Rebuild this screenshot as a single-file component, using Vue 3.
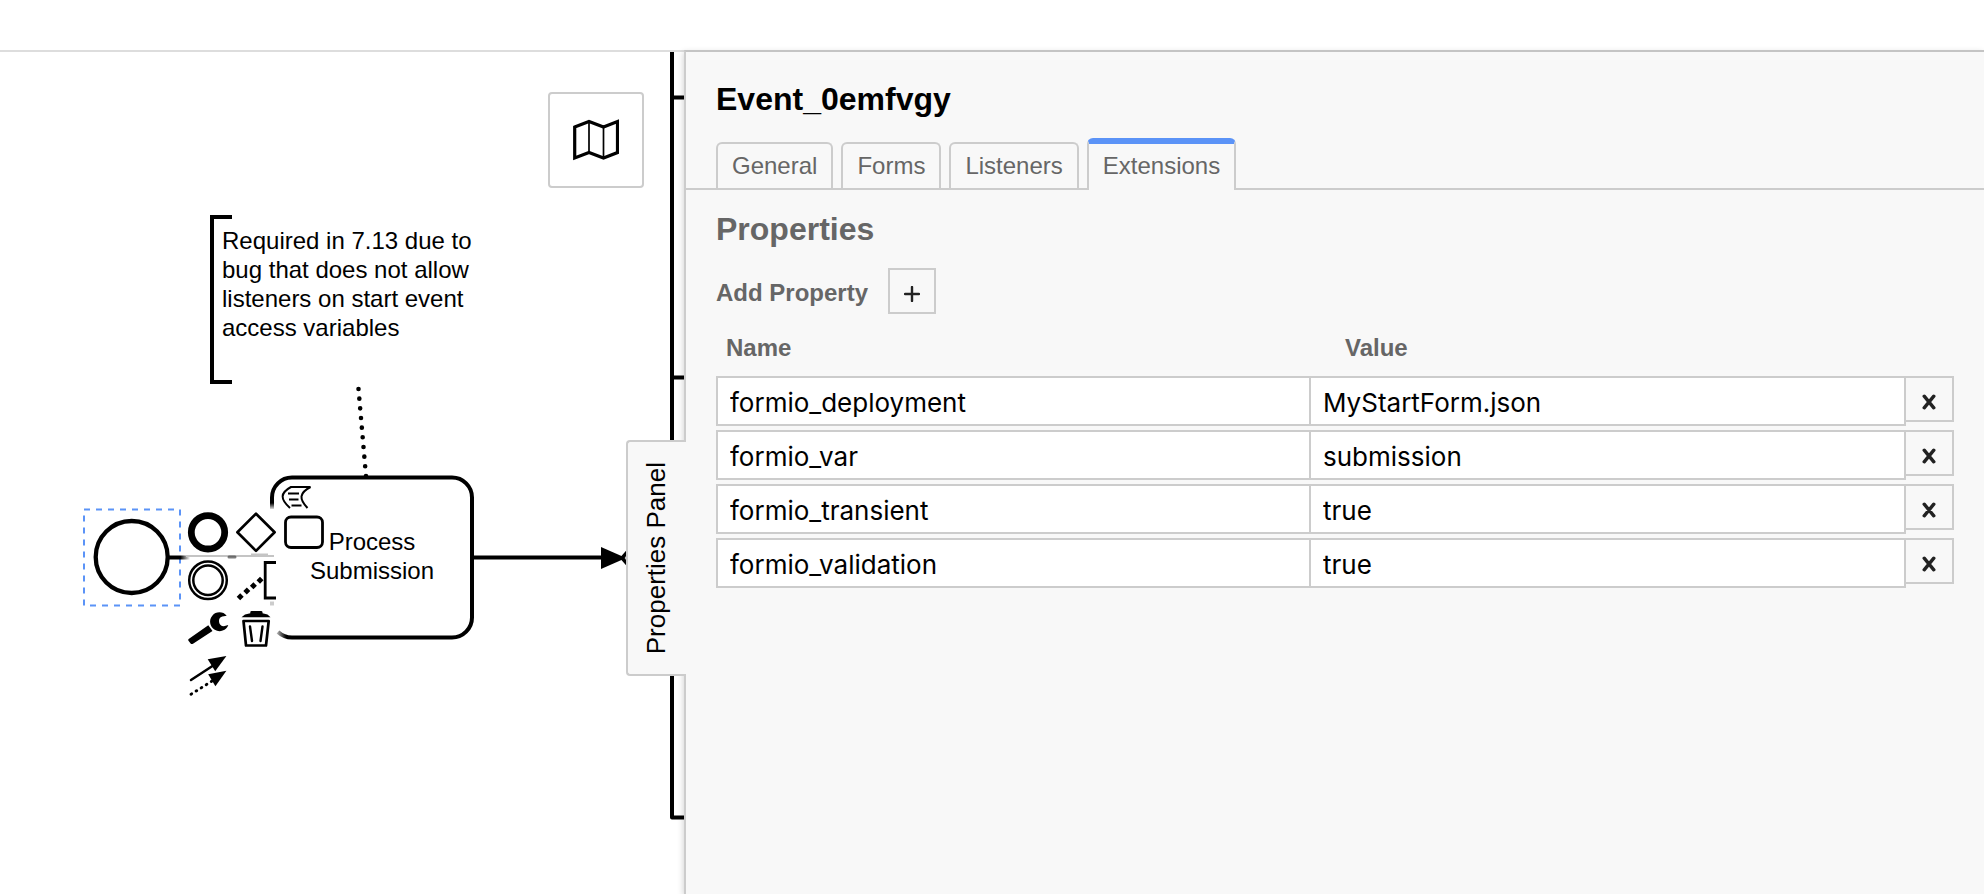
<script setup>
import { ref } from 'vue'

const tabs = ['General', 'Forms', 'Listeners', 'Extensions']
const activeTab = ref('Extensions')

const properties = ref([
  { name: 'formio_deployment', value: 'MyStartForm.json' },
  { name: 'formio_var', value: 'submission' },
  { name: 'formio_transient', value: 'true' },
  { name: 'formio_validation', value: 'true' },
])

function addProperty() {
  properties.value.push({ name: '', value: '' })
}

function removeProperty(index) {
  properties.value.splice(index, 1)
}
</script>

<template>
  <div class="modeler">
    <header class="topbar"></header>
    <main class="workspace">
      <section class="canvas" aria-label="Diagram">
        <svg class="diagram" width="700" height="842" viewBox="0 52 700 842" fill="none" stroke="#000">
          <defs>
            <linearGradient id="flow-fade" gradientUnits="userSpaceOnUse" x1="178" y1="0" x2="190" y2="0">
              <stop offset="0.2" stop-color="#000" />
              <stop offset="1" stop-color="#000" stop-opacity="0" />
            </linearGradient>
            <linearGradient id="side-fade" gradientUnits="userSpaceOnUse" x1="0" y1="500" x2="0" y2="510">
              <stop offset="0.3" stop-color="#000" />
              <stop offset="1" stop-color="#000" stop-opacity="0" />
            </linearGradient>
            <linearGradient id="corner-fade" gradientUnits="userSpaceOnUse" x1="277" y1="0" x2="286" y2="0">
              <stop offset="0" stop-color="#000" stop-opacity="0.3" />
              <stop offset="1" stop-color="#000" />
            </linearGradient>
          </defs>

          <!-- pool outline -->
          <path d="M672 52V817.5H700M672 97.5H700M672 377.5H700" stroke-width="4" stroke-linejoin="round" />

          <!-- text annotation -->
          <path d="M232 217H212V382H232" stroke-width="4" />
          <g class="label">
            <text x="222" y="249">Required in 7.13 due to</text>
            <text x="222" y="278">bug that does not allow</text>
            <text x="222" y="307">listeners on start event</text>
            <text x="222" y="336">access variables</text>
          </g>
          <path d="M358.500 389L366 476" stroke-width="4.600" stroke-linecap="round" stroke-dasharray="0 9.7" />

          <!-- start event -->
          <circle cx="131.700" cy="557" r="36" stroke-width="4.300" />
          <rect x="84" y="509.500" width="96" height="96" stroke="#5b93f7" stroke-width="2" stroke-dasharray="6 6" />
          <rect x="169" y="555.500" width="21" height="4" fill="url(#flow-fade)" stroke="none" />
          <path d="M186 556H274" stroke="#c4c4c4" stroke-width="2" />
          <path d="M251 554.500H268" stroke="#c4c4c4" stroke-width="2" />
          <path d="M229 557H235" stroke="#444" stroke-width="3" stroke-linecap="round" opacity="0.7" />
          <path d="M270 603.500H274" stroke="#ccc" stroke-width="4" />

          <!-- task -->
          <path d="M292 477.500H452A20 20 0 0 1 472 497.500V617.500A20 20 0 0 1 452 637.500H292" stroke-width="4" />
          <path d="M292 477.500A20 20 0 0 0 272 497.500V509" stroke="url(#side-fade)" stroke-width="4" />
          <path d="M292 637.500Q284 637.500 278 632" stroke="url(#corner-fade)" stroke-width="4" />
          <path d="M290 508C280 499 280 493 291 487H310.500C299 493 299 499 307.500 508" stroke-width="2" />
          <path d="M288 493.500H299M289 499.500H298.500M291.500 505.500H301.500" stroke-width="2" />
          <g class="label">
            <text x="372" y="550" text-anchor="middle">Process</text>
            <text x="372" y="579" text-anchor="middle">Submission</text>
          </g>

          <!-- outgoing flow -->
          <path d="M474 557.500H604" stroke-width="4" />
          <path d="M601 547L626 558L601 569Z" fill="#000" stroke="none" />
          <path d="M630 549L622 558L630 567" stroke-width="3.500" />
        </svg>

        <div class="context-pad">
          <button type="button" class="entry" aria-label="Append end event">
            <svg viewBox="0 0 48 48"><circle cx="24" cy="24.300" r="16.700" stroke-width="6.800" /></svg>
          </button>
          <button type="button" class="entry" aria-label="Append gateway">
            <svg viewBox="0 0 48 48"><path d="M24 5.700L42.600 24.300L24 42.900L5.400 24.300Z" stroke-width="2.700" stroke-linejoin="round" /></svg>
          </button>
          <button type="button" class="entry" aria-label="Append task">
            <svg viewBox="0 0 48 48"><rect x="5.500" y="9" width="37" height="30.500" rx="5.500" stroke-width="2.800" /></svg>
          </button>
          <button type="button" class="entry first" aria-label="Append intermediate event">
            <svg viewBox="0 0 48 48">
              <circle cx="24" cy="24.300" r="18.800" stroke-width="2.500" />
              <circle cx="24" cy="24.300" r="14.700" stroke-width="2.500" />
            </svg>
          </button>
          <button type="button" class="entry" aria-label="Append text annotation">
            <svg viewBox="0 0 48 48">
              <path d="M44 6.500H33.200V42H44" stroke-width="2.800" />
              <path d="M4.700 40.700l3.500-3.500 3.500 3.500-3.500 3.500zM11.300 35l3.500-3.500 3.500 3.500-3.500 3.500zM17.900 29.800l3.500-3.500 3.500 3.500-3.500 3.500zM24.500 24.300l3.500-3.500 3.500 3.500-3.500 3.500z" class="solid" />
            </svg>
          </button>
          <button type="button" class="entry first" aria-label="Change type">
            <svg viewBox="0 0 48 48">
              <path d="M5 34.800L24.300 21.300L28.500 27L9 39.800Q7.500 40.600 6.400 39.200L4.300 36.500Q3.800 35.600 5 34.800Z" class="solid" />
              <path d="M42.700 11.700A9.400 9.400 0 1 0 44.300 21L39.800 22.300A5 5 0 0 1 38.300 12.600Z" class="solid" />
            </svg>
          </button>
          <button type="button" class="entry" aria-label="Remove">
            <svg viewBox="0 0 48 48">
              <path d="M9.500 13.300L13 10.500L18.300 9.200V8Q18.500 7 19.500 7H29Q30.300 7 30.500 8V9.200L35.500 10.500L38.500 13.300Z" class="solid" />
              <path d="M11.500 17H36.700L34 41.500H14Z" stroke-width="2.700" stroke-linejoin="round" />
              <path d="M18 22.500L20 37M30.500 22.500L28.500 37" stroke-width="2.400" stroke-linecap="round" />
            </svg>
          </button>
          <button type="button" class="entry first" aria-label="Connect">
            <svg viewBox="0 0 48 48">
              <path d="M7 28L30 13" stroke-width="2.500" stroke-linecap="round" />
              <path d="M42.400 4L23.700 7.200L31.200 19.300Z" class="solid" />
              <path d="M7 42.300L28 29" stroke-width="2.900" stroke-linecap="round" stroke-dasharray="0.800 5.200" />
              <path d="M42.400 18.800L24.200 22.200L31.400 34.300Z" class="solid" />
            </svg>
          </button>
        </div>

        <button type="button" class="minimap" aria-label="Open minimap">
          <svg width="46" height="42" viewBox="0 0 46 42" fill="none" stroke="#000">
            <path d="M1.700 8L16 2.500L30.500 8L44.500 2.500V33.500L30.500 39L16 33.500L1.700 39Z" stroke-width="3.200" />
            <path d="M16 2.500V33.500M30.500 8V39" stroke-width="1.700" />
          </svg>
        </button>
      </section>

      <aside class="panel">
        <button type="button" class="panel-toggle"><span>Properties Panel</span></button>
        <h1 class="element-id">Event_0emfvgy</h1>
        <nav class="tabs">
          <button
            v-for="tab in tabs"
            :key="tab"
            type="button"
            class="tab"
            :class="{ active: tab === activeTab }"
            @click="activeTab = tab"
          >{{ tab }}</button>
        </nav>
        <div class="content">
          <h2 class="group-title">Properties</h2>
          <div class="add-row">
            <label for="add-property">Add Property</label>
            <button id="add-property" type="button" class="add" @click="addProperty">
              <svg width="16" height="16" viewBox="0 0 16 16"><path d="M8 1V15M1 8H15" stroke="#222" stroke-width="2.400" stroke-linecap="round" /></svg>
            </button>
          </div>
          <table class="properties">
            <colgroup>
              <col />
              <col />
              <col class="action-column" />
            </colgroup>
            <thead>
              <tr>
                <th id="name-heading" scope="col">Name</th>
                <th id="value-heading" class="value-heading" scope="col">Value</th>
                <td></td>
              </tr>
            </thead>
            <tbody>
              <tr v-for="(property, index) in properties" :key="index">
                <td><input v-model="property.name" type="text" class="field" aria-labelledby="name-heading" /></td>
                <td><input v-model="property.value" type="text" class="field value" aria-labelledby="value-heading" /></td>
                <td>
                  <button type="button" class="remove" aria-label="Remove property" @click="removeProperty(index)">
                    <svg width="14" height="16" viewBox="0 0 14 16"><path d="M2.200 2.200L11.800 13.800M11.800 2.200L2.200 13.800" stroke="#222" stroke-width="3.400" stroke-linecap="round" /></svg>
                  </button>
                </td>
              </tr>
            </tbody>
          </table>
        </div>
      </aside>
    </main>
  </div>
</template>

<style>
body {
  margin: 0;
  background: #fff;
}
</style>

<style scoped>
.modeler {
  display: flex;
  flex-direction: column;
  min-height: 100vh;
  font-family: "Liberation Sans", Arial, sans-serif;
  color: #000;
}

.modeler *,
.modeler {
  box-sizing: border-box;
}

button {
  margin: 0;
  padding: 0;
  font: inherit;
  color: inherit;
  cursor: pointer;
}

.topbar {
  height: 52px;
  border-bottom: 2px solid #ddd;
}

.workspace {
  flex: 1;
  display: grid;
  grid-template-columns: minmax(0, 684fr) minmax(0, 1300fr);
}

.canvas {
  position: relative;
  overflow: hidden;
}

.diagram {
  position: absolute;
  top: 0;
  left: 0;
}

.label {
  font-size: 24px;
  fill: #000;
  stroke: none;
}

.context-pad {
  position: absolute;
  top: 456px;
  left: 184px;
  display: grid;
  grid-template-columns: repeat(3, 48px);
  grid-auto-rows: 48px;
}

.entry {
  border: 0;
  background: transparent;
}

.entry.first {
  grid-column: 1;
}

.entry svg {
  display: block;
  width: 48px;
  height: 48px;
  fill: none;
  stroke: #000;
}

.entry .solid {
  fill: #000;
  stroke: none;
}

.minimap {
  position: absolute;
  top: 40px;
  right: 40px;
  display: flex;
  align-items: center;
  justify-content: center;
  width: 96px;
  height: 96px;
  border: 2px solid #ccc;
  border-radius: 4px;
  background: #fff;
}

.panel {
  position: relative;
  margin-top: -2px;
  padding-top: 29px;
  border-top: 2px solid #c4c4c4;
  border-left: 2px solid #ccc;
  background: #f8f8f8;
  box-shadow: -1px 2px 6px rgba(0, 0, 0, 0.16);
}

.panel-toggle {
  position: absolute;
  top: 388px;
  left: -60px;
  display: flex;
  align-items: center;
  justify-content: center;
  width: 60px;
  height: 236px;
  padding-right: 2px;
  border: 2px solid #ccc;
  border-right: 0;
  border-radius: 4px 0 0 4px;
  background: #f8f8f8;
  font-size: 26px;
  line-height: 30px;
}

.panel-toggle span {
  writing-mode: vertical-rl;
  transform: rotate(180deg);
  white-space: nowrap;
}

.element-id {
  margin: 0 30px;
  font-size: 32px;
  line-height: 36px;
}

.tabs {
  display: flex;
  align-items: flex-end;
  gap: 8px;
  margin-top: 21px;
  padding: 0 30px;
  height: 52px;
  border-bottom: 2px solid #ccc;
}

.tab {
  height: 46px;
  padding: 0 14px;
  border: 2px solid #ccc;
  border-bottom: 0;
  border-radius: 6px 6px 0 0;
  background: #f8f8f8;
  color: #666;
  font-size: 24px;
  line-height: 44px;
}

.tab.active {
  height: 52px;
  margin-bottom: -2px;
  padding-bottom: 2px;
  border-top: 6px solid #5b93f7;
}

.content {
  padding: 21px 30px;
  color: #666;
}

.group-title {
  margin: 0;
  font-size: 32px;
  line-height: 36px;
}

.add-row {
  display: flex;
  align-items: center;
  gap: 20px;
  margin-top: 21px;
  font-size: 24px;
  font-weight: bold;
}

.add-row label {
  padding-top: 4px;
}

.add,
.remove {
  display: flex;
  align-items: center;
  justify-content: center;
  width: 48px;
  height: 46px;
  border: 2px solid #ccc;
  background: #f8f8f8;
}

.add svg,
.remove svg {
  margin-top: 6px;
}

.properties {
  width: 100%;
  margin-top: 18px;
  table-layout: fixed;
  border-collapse: collapse;
}

.action-column {
  width: 48px;
}

.properties th {
  height: 44px;
  padding: 2px 0 14px 10px;
  font-size: 24px;
  line-height: 28px;
  text-align: left;
}

.properties .value-heading {
  padding-left: 34px;
}

.properties td {
  padding: 0;
  vertical-align: top;
}

.properties tbody td {
  height: 54px;
}

.field {
  display: block;
  width: 100%;
  height: 50px;
  margin: 0;
  padding: 2px 12px 0;
  border: 2px solid #ccc;
  border-radius: 0;
  outline: 0;
  background: #fff;
  color: #000;
  font-family: Inter, sans-serif;
  font-size: 26px;
}

.field.value {
  border-left: 0;
}

.remove {
  border-left: 0;
}
</style>
